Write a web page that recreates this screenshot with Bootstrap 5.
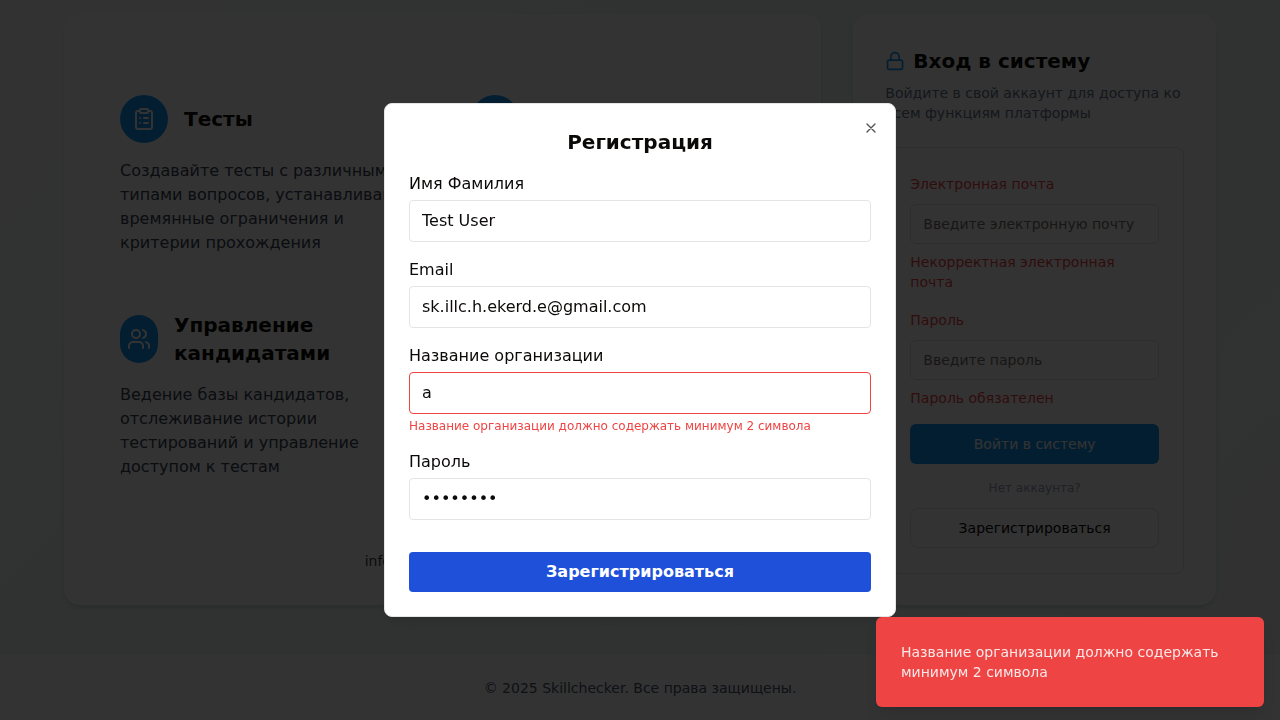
<!DOCTYPE html>
<html lang="ru">
<head>
<meta charset="utf-8">
<meta name="viewport" content="width=device-width, initial-scale=1">
<title>Skillchecker</title>
<link rel="stylesheet" href="https://cdn.jsdelivr.net/npm/bootstrap@5.3.0/dist/css/bootstrap.min.css">
<style>
  body { font-family: "DejaVu Sans", sans-serif; font-size: 16px; line-height: 24px; color: #0c0a09; height: 720px; overflow: hidden;
    background: linear-gradient(135deg, #fafafa 0%, #f0faf7 35%, #f1f8f7 70%, #f3f5f7 100%); }
  h2, h3 { font-size: 20px; line-height: 28px; font-weight: 700; margin: 0; }
  .page-grid { padding: 14px 64px 0; display: grid; grid-template-columns: repeat(3, minmax(0, 1fr)); gap: 32px; }
  .panel { background: #fff; border-radius: 16px; height: 591px; box-shadow: 0 4px 6px -1px rgba(0,0,0,.1), 0 2px 4px -2px rgba(0,0,0,.1); }
  .panel-features { grid-column: span 2; padding: 77px 56px 0; }
  .feature-grid { display: grid; grid-template-columns: 294.67px 294.67px; column-gap: 56px; grid-template-rows: 216px 238px; }
  .feature-text { color: #374155; white-space: nowrap; }
  .feature-head { min-height: 56px; gap: 16px; }
  .feature-head.single { min-height: 48px; margin-top: 4px; }
  .bubble { width: 48px; height: 48px; border-radius: 24px; background: #1698f4; color: #fff; flex: none; }
  .bubble-narrow { width: 38px; }
  .contact-line { font-size: 14px; line-height: 20px; color: #374151; padding-top: 6px; }
  .panel-login { padding: 33px 32px 0; }
  .sm-text { font-size: 14px; line-height: 20px; }
  .login-desc { color: #64748b; }
  .login-form { border: 1px solid #d3e3f3; border-radius: 8px; padding: 26px 24px 24px; margin-top: 24px; height: 427px; }
  .red { color: #ef4444; }
  .login-form .form-control { height: 40px; font-size: 14px; padding: 0 12px; border-color: #e0e0e0; border-radius: 6px; margin: 10px 0 8px; background: #fff; }
  .login-form .form-control::placeholder { color: #78716c; opacity: 1; }
  .login-form .btn { height: 40px; font-size: 14px; line-height: 20px; border-radius: 6px; padding: 0; }
  .login-go { background: #1698f4; color: #fff; }
  .login-form .login-reg { border: 1px solid #e0e0e0; border-radius: 8px; color: #0c0a09; }
  .login-hint { font-size: 12px; line-height: 16px; color: #94a3b8; margin: 16px 0 12px; }
  .page-footer { margin-top: 48px; height: 67px; background: #fff; border-top: 1px solid #eceff3; color: #475569; padding-top: 24px; }
  .shade { background: #000; opacity: .8; z-index: 1050; }
  .modal-dialog { max-width: 512px; margin: 0 auto; min-height: 720px !important; }
  .modal-content { border: 1px solid #e5e5e5; background-clip: border-box; border-radius: 8px; padding: 24px; height: 514px; color: #0c0a09; box-shadow: 0 10px 15px -3px rgba(0,0,0,.1), 0 4px 6px -4px rgba(0,0,0,.1); }
  .modal-content .form-control { height: 42px; font-size: 16px; padding: 7px 12px 9px; line-height: 24px; border-color: #e5e5e5; border-radius: 4px; margin-top: 4px; color: #0c0a09; background: #fff; }
  .modal-content .form-control.bad { border-color: #ef4444; }
  .err { font-size: 12px; line-height: 16px; margin-top: 4px; }
  .signup, .signup:hover { background: #1e50da; color: #fff; }
  .signup { font-weight: 700; height: 40px; border-radius: 4px; padding: 0; margin-top: 16px; }
  .close-x { top: 16px; right: 16px; width: 16px; height: 16px; opacity: .7; line-height: 0; }
  .notice { right: 16px; bottom: 13px; width: 388px; height: 90px; padding: 25px; border-radius: 6px; background: #ef4444; color: rgba(250,250,250,.9); z-index: 1060; box-shadow: 0 10px 15px -3px rgba(0,0,0,.1), 0 4px 6px -4px rgba(0,0,0,.1); }
  svg { fill: none; stroke: currentColor; stroke-width: 2; stroke-linecap: round; stroke-linejoin: round; flex: none; }
</style>
</head>
<body>
<main class="page-grid">
  <section class="panel panel-features">
    <div class="feature-grid">
      <div>
        <div class="feature-head single d-flex align-items-center">
          <div class="bubble d-flex align-items-center justify-content-center">
            <svg width="24" height="24" viewBox="0 0 24 24"><rect x="8" y="2" width="8" height="4" rx="1"/><path d="M16 4h2a2 2 0 0 1 2 2v14a2 2 0 0 1-2 2H6a2 2 0 0 1-2-2V6a2 2 0 0 1 2-2h2M12 11h4M12 16h4M8 11h.01M8 16h.01"/></svg>
          </div>
          <h3>Тесты</h3>
        </div>
        <p class="feature-text mt-3 mb-0">Создавайте тесты с различными<br>типами вопросов, устанавливайте<br>времянные ограничения и<br>критерии прохождения</p>
      </div>
      <div>
        <div class="feature-head single d-flex align-items-center"><div class="bubble"></div></div>
      </div>
      <div class="pt-1">
        <div class="feature-head d-flex align-items-center">
          <div class="bubble bubble-narrow d-flex align-items-center justify-content-center">
            <svg width="24" height="24" viewBox="0 0 24 24"><path d="M16 21v-2a4 4 0 0 0-4-4H6a4 4 0 0 0-4 4v2"/><circle cx="9" cy="7" r="4"/><path d="M22 21v-2a4 4 0 0 0-3-3.87M16 3.13a4 4 0 0 1 0 7.75"/></svg>
          </div>
          <h3>Управление<br>кандидатами</h3>
        </div>
        <p class="feature-text mt-3 mb-0">Ведение базы кандидатов,<br>отслеживание истории<br>тестирований и управление<br>доступом к тестам</p>
      </div>
    </div>
    <div class="contact-line text-center">info@skillchecker.tech</div>
  </section>

  <section class="panel panel-login">
    <div class="d-flex align-items-center gap-2">
      <svg width="20" height="20" viewBox="0 0 24 24" style="color:#1698f4"><rect x="3" y="11" width="18" height="11" rx="2"/><path d="M7 11V7a5 5 0 0 1 10 0v4"/></svg>
      <h2>Вход в систему</h2>
    </div>
    <div class="sm-text login-desc mt-2">Войдите в свой аккаунт для доступа ко всем функциям платформы</div>
    <div class="login-form">
      <div class="sm-text red">Электронная почта</div>
      <input class="form-control" placeholder="Введите электронную почту">
      <div class="sm-text red">Некорректная электронная почта</div>
      <div class="sm-text red" style="margin-top:18px">Пароль</div>
      <input class="form-control" placeholder="Введите пароль">
      <div class="sm-text red">Пароль обязателен</div>
      <button class="btn login-go w-100 mt-3 d-block">Войти в систему</button>
      <div class="login-hint text-center">Нет аккаунта?</div>
      <button class="btn login-reg w-100 d-block">Зарегистрироваться</button>
    </div>
  </section>
</main>
<footer class="page-footer sm-text text-center">© 2025 Skillchecker. Все права защищены.</footer>

<div class="shade position-fixed top-0 start-0 w-100 h-100"></div>
<div class="modal d-block overflow-hidden" tabindex="-1">
  <div class="modal-dialog modal-dialog-centered">
    <div class="modal-content">
      <h2 class="text-center mb-3">Регистрация</h2>
      <div class="d-flex flex-column gap-3">
        <div><div>Имя Фамилия</div><input class="form-control" value="Test User"></div>
        <div><div>Email</div><input class="form-control" value="sk.illc.h.ekerd.e@gmail.com"></div>
        <div><div>Название организации</div><input class="form-control bad" value="a"><div class="err red">Название организации должно содержать минимум 2 символа</div></div>
        <div><div>Пароль</div><input class="form-control" type="password" value="password"></div>
        <button class="btn signup border-0 w-100">Зарегистрироваться</button>
      </div>
      <div class="close-x position-absolute"><svg width="16" height="16" viewBox="0 0 24 24"><path d="M18 6 6 18M6 6l12 12"/></svg></div>
    </div>
  </div>
</div>
<div class="notice position-fixed sm-text">Название организации должно содержать минимум 2 символа</div>
<script src="https://cdn.jsdelivr.net/npm/bootstrap@5.3.0/dist/js/bootstrap.bundle.min.js"></script>
</body>
</html>
